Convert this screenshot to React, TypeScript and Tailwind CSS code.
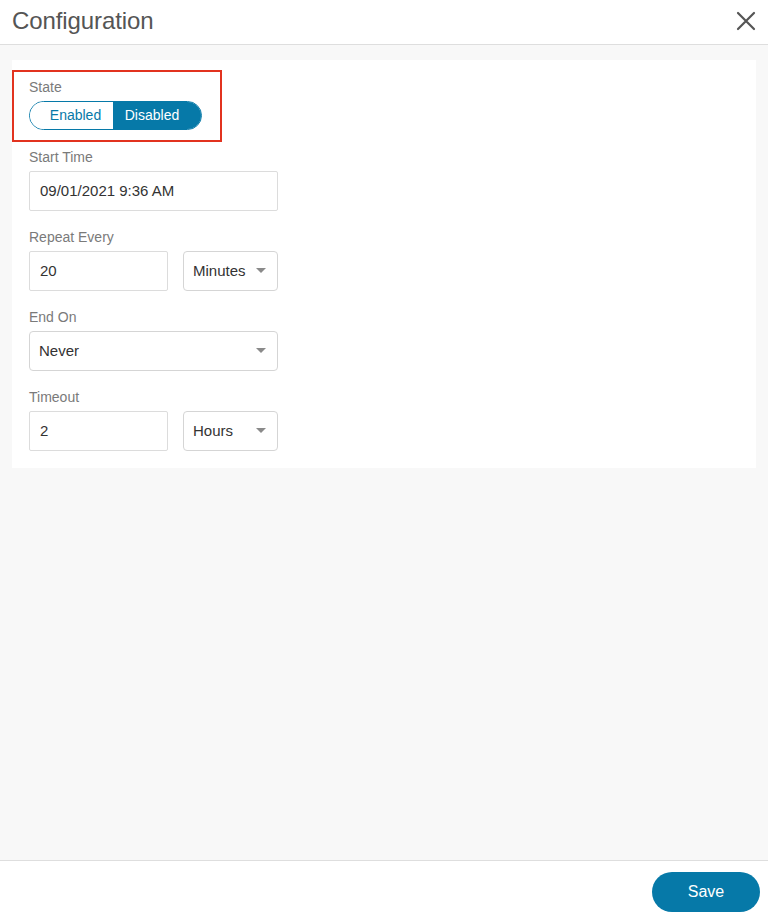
import React from "react";

function Caret() {
  return (
    <svg width="10" height="6" viewBox="0 0 10 6" className="shrink-0">
      <path d="M0 0 L10 0 L5 5 Z" fill="#8a8a8a" />
    </svg>
  );
}

function Label({ children }: { children: React.ReactNode }) {
  return <div className="text-[14px] leading-[16px] text-[#7a7a7a] mb-[6px]">{children}</div>;
}

function TextInput({ value, w }: { value: string; w: string }) {
  return (
    <div className={`${w} h-[40px] border border-[#dcdcdc] rounded-[2px] bg-white flex items-center pl-[10px] text-[15px] text-[#333]`}>
      {value}
    </div>
  );
}

function Select({ value, w }: { value: string; w: string }) {
  return (
    <div className={`${w} h-[40px] border border-[#d5d5d5] rounded-[4px] bg-white flex items-center justify-between pl-[9px] pr-[11px] text-[15px] text-[#333]`}>
      <span>{value}</span>
      <Caret />
    </div>
  );
}

export default function App() {
  return (
    <div className="w-[768px] h-[924px] flex flex-col bg-white" style={{ fontFamily: '"Liberation Sans", Arial, sans-serif' }}>
      <div className="h-[45px] shrink-0 flex items-center justify-between pl-[12px] pr-[12px] border-b border-[#dedede]">
        <div className="text-[24px] text-[#555] leading-none -mt-[2px] tracking-[-0.1px]">Configuration</div>
        <svg width="20" height="20" viewBox="0 0 20 20" className="-mt-[2px]">
          <path d="M2 2 L18 18 M18 2 L2 18" stroke="#555" strokeWidth="2.2" strokeLinecap="round" />
        </svg>
      </div>
      <div className="flex-1 bg-[#f8f8f8] px-[12px] pt-[15px]">
        <div className="relative bg-white pl-[17px] pt-[19px] pb-[17px] flex flex-col gap-[18px]">
          <div className="absolute left-0 top-[10px] w-[210px] h-[72px] border-2 border-[#e2331f]" />
          <div className="mb-[1px]">
            <Label>State</Label>
            <div className="flex w-[173px] h-[29px] rounded-full border border-[#0679a8] overflow-hidden text-[14px]">
              <div className="w-[83px] flex items-center justify-center text-[#0679a8] bg-white pl-[8px]">Enabled</div>
              <div className="flex-1 flex items-center justify-center bg-[#0679a8] text-white pr-[10px]">Disabled</div>
            </div>
          </div>
          <div>
            <Label>Start Time</Label>
            <TextInput value="09/01/2021 9:36 AM" w="w-[249px]" />
          </div>
          <div>
            <Label>Repeat Every</Label>
            <div className="flex gap-[15px]">
              <TextInput value="20" w="w-[139px]" />
              <Select value="Minutes" w="w-[95px]" />
            </div>
          </div>
          <div>
            <Label>End On</Label>
            <Select value="Never" w="w-[249px]" />
          </div>
          <div>
            <Label>Timeout</Label>
            <div className="flex gap-[15px]">
              <TextInput value="2" w="w-[139px]" />
              <Select value="Hours" w="w-[95px]" />
            </div>
          </div>
        </div>
      </div>
      <div className="h-[64px] shrink-0 border-t border-[#dedede] flex items-center justify-end pr-[8px] pb-[2px]">
        <button className="w-[108px] h-[40px] rounded-full bg-[#0679a8] text-white text-[16px]">Save</button>
      </div>
    </div>
  );
}
